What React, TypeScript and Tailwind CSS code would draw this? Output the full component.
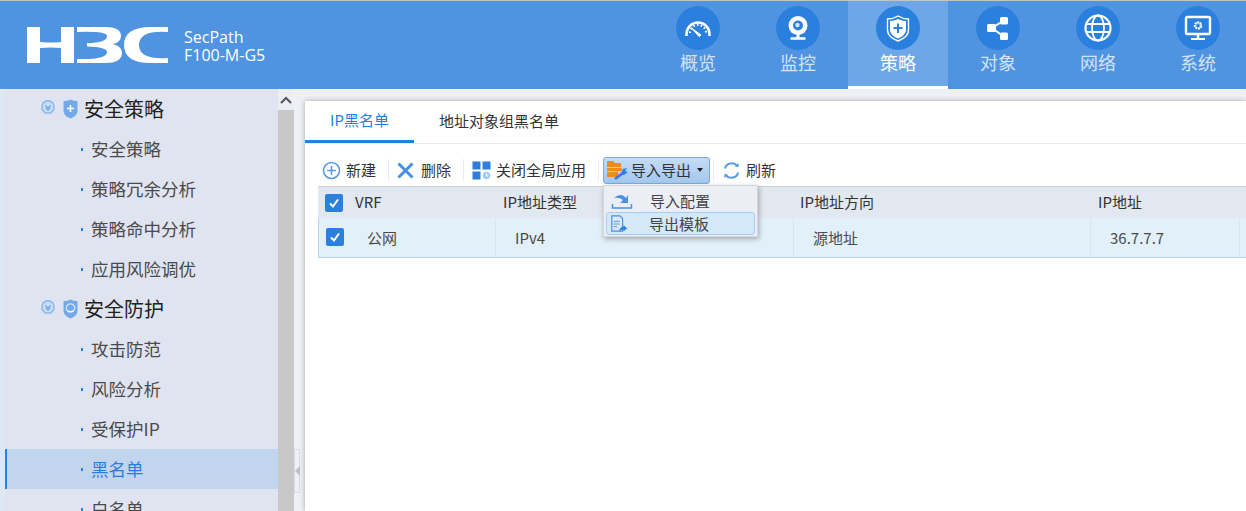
import React from "react";

const cjk = "font-['Noto_Sans_CJK_SC','Noto_Sans',sans-serif]";

function Circle({ children }: { children: React.ReactNode }) {
  return (
    <div className="w-11 h-11 rounded-full bg-[#2b80de] flex items-center justify-center">
      <svg width="30" height="30" viewBox="0 0 30 30" fill="none" stroke="#fff" strokeWidth="2">
        {children}
      </svg>
    </div>
  );
}

const navItems: { label: string; active?: boolean; icon: React.ReactNode }[] = [
  {
    label: "概览",
    icon: (
      <>
        <path d="M3.5 23 V21 A11.5 11.5 0 0 1 26.5 21 V23" strokeWidth="2.6" />
        <path d="M7 20 A8 8 0 0 1 23 20" strokeWidth="2" strokeDasharray="1.6 2.2" />
        <path d="M18 22 L8.5 15 L16 23.5 Z" fill="#fff" strokeWidth="1" />
      </>
    ),
  },
  {
    label: "监控",
    icon: (
      <>
        <circle cx="15" cy="12.5" r="9.5" fill="#fff" stroke="none" />
        <circle cx="15" cy="12.5" r="5" fill="#2b80de" stroke="none" />
        <circle cx="14.5" cy="12" r="2.2" fill="#d5e6f8" stroke="none" />
        <path d="M7.5 25.5 h15" strokeWidth="2.5" />
        <path d="M15 21 v4" strokeWidth="3" />
      </>
    ),
  },
  {
    label: "策略",
    active: true,
    icon: (
      <>
        <path d="M4.5 6 Q10 6 15 3 Q20 6 25.5 6 V17 Q25.5 24 15 28 Q4.5 24 4.5 17 Z" strokeWidth="1.4" />
        <path d="M7 8 Q11 8 15 6 Q19 8 23 8 V17 Q23 22 15 25.5 Q7 22 7 17 Z" fill="#fff" stroke="none" />
        <path d="M15 10.5 V20 M10.5 15 H19.5" stroke="#2b80de" />
      </>
    ),
  },
  {
    label: "对象",
    icon: (
      <>
        <path d="M20 8 L9 15 L20 23" />
        <rect x="4" y="11" width="9" height="8" rx="1.5" fill="#fff" stroke="none" />
        <rect x="17" y="4" width="8" height="7.5" rx="1.5" fill="#fff" stroke="none" />
        <rect x="17" y="19.5" width="8" height="7.5" rx="1.5" fill="#fff" stroke="none" />
      </>
    ),
  },
  {
    label: "网络",
    icon: (
      <>
        <circle cx="15" cy="15" r="12.5" strokeWidth="2.2" />
        <ellipse cx="15" cy="15" rx="6" ry="12.5" strokeWidth="1.8" />
        <path d="M3 11 H27 M3 19 H27" strokeWidth="1.8" />
      </>
    ),
  },
  {
    label: "系统",
    icon: (
      <>
        <rect x="3" y="4" width="24" height="17" rx="1.5" strokeWidth="2.4" />
        <circle cx="15" cy="12.5" r="3" strokeWidth="2.4" strokeDasharray="2 0.6" />
        <path d="M15 21 v4" strokeWidth="2.5" />
        <path d="M8 26 H22" strokeWidth="2" />
      </>
    ),
  },
];

const sideItems = [
  { label: "安全策略", group: "plus" },
  { label: "安全策略" },
  { label: "策略冗余分析" },
  { label: "策略命中分析" },
  { label: "应用风险调优" },
  { label: "安全防护", group: "face" },
  { label: "攻击防范" },
  { label: "风险分析" },
  { label: "受保护IP" },
  { label: "黑名单", active: true },
  { label: "白名单" },
];

function Check() {
  return (
    <span className="w-[18px] h-[18px] rounded-[2px] bg-[#2b80de] flex items-center justify-center">
      <svg width="12" height="12" viewBox="0 0 12 12" fill="none" stroke="#fff" strokeWidth="2">
        <path d="M2 6.5 L5 9.5 L10 2.5" />
      </svg>
    </span>
  );
}

function GroupIcons({ kind }: { kind: string }) {
  return (
    <>
      <svg width="14" height="14" viewBox="0 0 14 14" fill="none" className="shrink-0 mb-[5px]">
        <circle cx="7" cy="7" r="6.2" stroke="#86b6ec" strokeWidth="1.4" fill="#c9dcf3" />
        <path d="M4.2 5.5 L7 8 L9.8 5.5 M4.8 8 L7 10 L9.2 8" stroke="#6ea6e6" strokeWidth="1.2" />
      </svg>
      <svg width="15" height="20" viewBox="0 0 15 20" className="ml-[8px] shrink-0">
        <path d="M0.5 2 Q4.5 2 7.5 0.5 Q10.5 2 14.5 2 V12 Q14.5 16.5 7.5 19.5 Q0.5 16.5 0.5 12 Z" fill="#73a9e8" />
        {kind === "plus" ? (
          <path d="M7.5 6 V13 M4 9.5 H11" stroke="#fff" strokeWidth="1.6" />
        ) : (
          <>
            <circle cx="7.5" cy="9" r="4.2" fill="none" stroke="#d5e6f8" strokeWidth="1.2" />
            <path d="M4.5 11.5 Q7.5 14 10.5 11.5" fill="none" stroke="#fff" strokeWidth="1.2" />
          </>
        )}
      </svg>
    </>
  );
}

export default function App() {
  return (
    <div className={`w-[1246px] h-[511px] overflow-hidden flex flex-col bg-[#eef0f6] ${cjk}`}>
      <header className="h-[89px] shrink-0 bg-[#5093e1] border-t border-[#c4c4c4] flex">
        <div className="flex items-center shrink-0 w-[648px] pl-[27px]">
          <svg width="141" height="36" viewBox="0 0 141 36" fill="#fff" className="shrink-0">
            <path d="M0 0 H13 V15 Q24 16 34 15 V0 H47 V36 H34 V21 Q24 20 13 21 V36 H0 Z" />
            <path d="M50 0 H78 Q94 0 94 9 Q94 15 86 17.5 Q95 19 95 26 Q95 36 78 36 H50 V32 Q80 33 80 25 Q80 20 60 19.5 V16 Q80 16 80 9 Q80 4 50 5 Z" />
            <path d="M141 0 H124 Q97 0 97 18 Q97 36 124 36 H141 V31 Q112 33 112 18 Q112 3 141 5 Z" />
          </svg>
          <div className="ml-[16px] mt-[1px] text-white text-[16px] leading-[18px] font-['Open_Sans',sans-serif]">
            <div>SecPath</div>
            <div>F100-M-G5</div>
          </div>
        </div>
        <nav className="flex shrink-0">
          {navItems.map((n) => (
            <div
              key={n.label}
              className={`w-[100px] shrink-0 h-[88px] flex flex-col items-center pt-[5px] ${
                n.active ? "bg-[#6ea7e8] border-b-[3px] border-white text-white" : "text-[#d3e3f8]"
              }`}
            >
              <Circle>{n.icon}</Circle>
              <span className="text-[18px] leading-[26px] -mt-[1px]">{n.label}</span>
            </div>
          ))}
        </nav>
      </header>
      <div className="flex flex-1 min-h-0">
        <aside className="w-[294px] shrink-0 flex overflow-hidden bg-[#dde8f7] pl-[5px]">
          <div className="w-[273px] bg-[#dfe4f0]">
            {sideItems.map((s, i) =>
              s.group ? (
                <div key={i} className="h-10 flex items-center pl-[36px] text-[20px] text-[#222]">
                  <GroupIcons kind={s.group} />
                  <span className="ml-[6px]">{s.label}</span>
                </div>
              ) : (
                <div
                  key={i}
                  className={
                    s.active
                      ? "h-10 flex items-center pl-[74px] text-[17.5px] bg-[#c1d6ee] text-[#2b7cdc] border-l-2 border-[#2b80de]"
                      : "h-10 flex items-center pl-[76px] text-[17.5px] text-[#4a4a4a]"
                  }
                >
                  <span className="w-[2px] h-[3px] bg-[#2b80de] mr-[8px]" />
                  {s.label}
                </div>
              )
            )}
          </div>
          <div className="w-4 bg-[#eceef5] flex flex-col">
            <div className="h-[21px] flex items-center justify-center">
              <svg width="12" height="8" viewBox="0 0 12 8" fill="none" stroke="#555" strokeWidth="2">
                <path d="M1 7 L6 2 L11 7" />
              </svg>
            </div>
            <div className="flex-1 bg-[#c8c8c8]" />
          </div>
        </aside>
        <div className="relative w-[11px] shrink-0 bg-[#eef0f6]">
          <div className="absolute left-0 top-[360px] w-[6px] h-[44px] border border-[#d6dcea] flex items-center">
            <span className="w-0 h-0 border-y-[5px] border-y-transparent border-r-[5px] border-r-[#c0c0c0]" />
          </div>
        </div>
        <main className="relative flex-1 mt-[12px] bg-white min-w-0 shadow-[0_0_5px_rgba(0,0,0,0.3)]">
          <div className="flex h-[43px] border-b border-[#e6e8f2] text-[15px] text-[#333]">
            <div className="w-[109px] pl-[25px] flex items-center text-[#2b7cdc] border-b-[3px] border-[#2080e8]">IP黑名单</div>
            <div className="ml-[25px] pb-[2px] flex items-center">地址对象组黑名单</div>
          </div>
          <div className="flex items-center h-[42px] pt-[10px] pl-[17px] text-[15px] text-[#333]">
            <span className="flex items-center gap-[5px]">
              <svg width="19" height="19" viewBox="0 0 19 19" fill="none" stroke="#5b9be3" strokeWidth="1.6">
                <circle cx="9.5" cy="9.5" r="8" />
                <path d="M9.5 5 V14 M5 9.5 H14" />
              </svg>
              新建
            </span>
            <span className="w-px h-[22px] bg-[#e8eaee] ml-[12px] mr-[8px]" />
            <span className="flex items-center gap-[7px]">
              <svg width="17" height="17" viewBox="0 0 17 17" fill="none" stroke="#4a90e2" strokeWidth="3">
                <path d="M1.5 1.5 L15.5 15.5 M15.5 1.5 L1.5 15.5" />
              </svg>
              删除
            </span>
            <span className="w-px h-[22px] bg-[#e8eaee] ml-[12px] mr-[8px]" />
            <span className="flex items-center gap-[5px]">
              <svg width="19" height="19" viewBox="0 0 19 19">
                <rect x="0.5" y="0.5" width="8" height="8" fill="#2f7fd8" />
                <rect x="10.5" y="0.5" width="8" height="8" fill="#2f7fd8" />
                <rect x="0.5" y="10.5" width="8" height="8" fill="#2f7fd8" />
                <circle cx="14.5" cy="14.5" r="3.8" fill="#a6c9ef" />
                <path d="M14.5 12.5 V15 H16" stroke="#fff" fill="none" />
              </svg>
              关闭全局应用
            </span>
            <span className="w-px h-[22px] bg-[#e8eaee] ml-[12px] mr-[4px]" />
            <span className="relative flex items-center h-[27px] w-[107px] rounded-[3px] border border-[#7eaad8] bg-gradient-to-b from-[#c5dcf3] to-[#a3c7ed] pl-[1px]">
              <svg width="24" height="22" viewBox="0 0 24 22" className="shrink-0">
                <path d="M2 2 H8 L10 4 H16 V8 H2 Z" fill="#ee8a1e" />
                <rect x="2" y="9" width="15" height="3" fill="#ee8a1e" />
                <rect x="2" y="13" width="11" height="5" fill="#ee8a1e" />
                <path d="M10 20 L18 14" stroke="#2b80de" strokeWidth="2.6" />
                <path d="M16 15 L18 10 L22 9 L20 12 L23 13 L19 16 Z" fill="#2b80de" />
              </svg>
              <span className="ml-[2px]">导入导出</span>
              <span className="ml-[6px] w-0 h-0 border-x-[3.5px] border-x-transparent border-t-[4px] border-t-[#222]" />
            </span>
            <span className="w-px h-[22px] bg-[#e8eaee] ml-[3px] mr-[8px]" />
            <span className="flex items-center gap-[5px]">
              <svg width="19" height="19" viewBox="0 0 20 20" fill="none" stroke="#5b9be3" strokeWidth="2.2">
                <path d="M3 8 A7.5 7.5 0 0 1 16 5" />
                <path d="M17 12 A7.5 7.5 0 0 1 4 15" />
                <path d="M13.5 5.5 L17.5 6.5 L17.5 2" fill="#5b9be3" stroke="none" />
                <path d="M6.5 14.5 L2.5 13.5 L2.5 18" fill="#5b9be3" stroke="none" />
              </svg>
              刷新
            </span>
          </div>
          <div className="ml-[13px] text-[15px]">
            <div className="flex h-[32px] bg-[#e2e8ef] border-t border-[#c9ced6] items-center text-[#333]">
              <div className="w-[177px] pl-[7px] flex items-center">
                <Check />
                <span className="ml-[12px]">VRF</span>
              </div>
              <div className="w-[297px] pl-[8px]">IP地址类型</div>
              <div className="w-[298px] pl-[8px]">IP地址方向</div>
              <div className="flex-1 pl-[8px]">IP地址</div>
            </div>
            <div className="flex h-[40px] bg-[#e2f0f9] border-b border-[#b6d4ef] border-l items-center text-[#4a4a4a]">
              <div className="w-[177px] h-full pl-[7px] pt-[2px] flex items-center border-r border-[#d9e4ee]">
                <span className="mb-[4px]">
                  <Check />
                </span>
                <span className="ml-[23px]">公网</span>
              </div>
              <div className="w-[298px] h-full pl-[19px] pt-[2px] flex items-center border-r border-[#d9e4ee]">IPv4</div>
              <div className="w-[297px] h-full pl-[19px] pt-[2px] flex items-center border-r border-[#d9e4ee]">源地址</div>
              <div className="w-[149px] h-full pl-[19px] pt-[2px] flex items-center border-r border-[#d9e4ee]">36.7.7.7</div>
            </div>
          </div>
          <div className="absolute left-[298px] top-[84px] w-[155px] h-[52px] bg-[#eceef5] border border-[#d3d6de] shadow-[1px_2px_5px_rgba(0,0,0,0.3)] px-[2px] pt-[1px] text-[15px] text-[#444]">
            <div className="flex items-center h-[25px] pl-[5px]">
              <svg width="22" height="20" viewBox="0 0 22 20" fill="none" className="shrink-0">
                <path d="M3 8 Q10 2 15 8 L17 5 V13 H9 L12 10 Q8 7 3 8 Z" fill="#4a90e2" />
                <path d="M1.5 14 V18 H20.5 V14" stroke="#4a90e2" strokeWidth="1.5" />
              </svg>
              <span className="ml-[17px] mt-[4px]">导入配置</span>
            </div>
            <div className="flex items-center h-[23px] pl-[3px] bg-[#d3e9f9] border border-[#a8cdf0] rounded-[3px]">
              <svg width="18" height="18" viewBox="0 0 20 20" fill="none" className="shrink-0">
                <path d="M2 1 H11 L14 4 V18 H2 Z" fill="#dbe8f6" stroke="#4a90e2" strokeWidth="1.3" />
                <path d="M4 7 H11 M4 10 H11 M4 13 H8" stroke="#4a90e2" />
                <path d="M10 18 Q11 13 15 13 V11 L19 15 L15 18 V16 Q12 16 10 18 Z" fill="#2b80de" />
              </svg>
              <span className="ml-[21px] mt-[2px]">导出模板</span>
            </div>
          </div>
        </main>
      </div>
    </div>
  );
}
